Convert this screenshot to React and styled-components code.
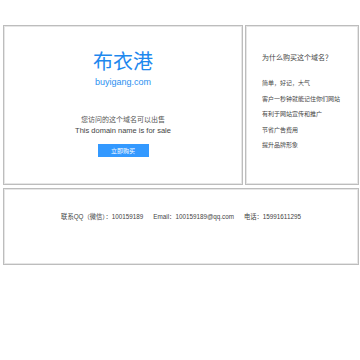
import styled, { createGlobalStyle } from 'styled-components';

const GlobalStyle = createGlobalStyle`
	html, body {
		margin: 0;
		padding: 0;
		background: #fff;
	}
	body {
		font-family: 'Liberation Sans', 'Noto Sans CJK SC', sans-serif;
		color: #333;
	}
`;

const reasons = [
	'简单，好记，大气',
	'客户一秒钟就能记住你们网站',
	'有利于网站宣传和推广',
	'节省广告费用',
	'提升品牌形象',
];

const App = () => {
	return (
		<>
			<GlobalStyle />
			<Page>
				<TopRow>
					<SaleBox>
						<Title>布衣港</Title>
						<Domain>buyigang.com</Domain>
						<Notice>您访问的这个域名可以出售</Notice>
						<NoticeEn>This domain name is for sale</NoticeEn>
						<BuyButton>立即购买</BuyButton>
					</SaleBox>
					<ReasonBox>
						<ReasonTitle>为什么购买这个域名？</ReasonTitle>
						<ReasonList>
							{reasons.map(r => (
								<li key={r}>{r}</li>
							))}
						</ReasonList>
					</ReasonBox>
				</TopRow>
				<Footer>
					<span>联系QQ（微信）：100159189</span>
					<span>Email：100159189@qq.com</span>
					<span>电话：15991611295</span>
				</Footer>
			</Page>
		</>
	);
};

const Page = styled.div`
	padding: 25px 1px 0 3px;
	width: 356px;
	display: flex;
	flex-direction: column;
	gap: 3px;
`;

const TopRow = styled.div`
	display: flex;
	gap: 2px;
	height: 160px;
`;

const Box = styled.div`
	box-sizing: border-box;
	border: 1px solid #bdbdbd;
	box-shadow: inset 0 0 0 1px #e6e6e6;
	background: #fff;
`;

const SaleBox = styled(Box)`
	width: 240px;
	display: flex;
	flex-direction: column;
	align-items: center;
	padding-top: 25px;
`;

const Title = styled.h1`
	margin: 0;
	font-family: 'Noto Sans CJK SC', sans-serif;
	font-weight: 400;
	font-size: 20px;
	line-height: 20px;
	color: #1e88ee;
`;

const Domain = styled.p`
	margin: 5px 0 0;
	font-size: 9px;
	line-height: 12px;
	color: #2c8ff0;
`;

const Notice = styled.p`
	margin: 26px 0 0;
	font-size: 7px;
	line-height: 11px;
	color: #555;
`;

const NoticeEn = styled.p`
	margin: 0;
	font-size: 7.5px;
	line-height: 11px;
	color: #444;
`;

const BuyButton = styled.button`
	margin-top: 8px;
	width: 51px;
	height: 13px;
	padding: 0;
	border: none;
	background: #3399ff;
	color: #fff;
	font-family: 'Noto Sans CJK SC', sans-serif;
	font-size: 6px;
	line-height: 13px;
`;

const ReasonBox = styled(Box)`
	flex: 1;
	padding: 26px 0 0 16px;
`;

const ReasonTitle = styled.h2`
	margin: 0;
	font-family: 'Noto Sans CJK SC', sans-serif;
	font-weight: 400;
	font-size: 7px;
	line-height: 10px;
	color: #444;
`;

const ReasonList = styled.ul`
	margin: 13px 0 0;
	padding: 0;
	list-style: none;
	font-family: 'Noto Sans CJK SC', sans-serif;
	font-size: 6px;
	color: #444;
	li {
		line-height: 15.5px;
	}
`;

const Footer = styled(Box)`
	height: 77px;
	display: flex;
	justify-content: center;
	gap: 10px;
	padding-top: 23px;
	font-family: 'Liberation Sans', 'Noto Sans CJK SC', sans-serif;
	font-size: 6.3px;
	line-height: 10px;
	color: #444;
`;

export default App;
